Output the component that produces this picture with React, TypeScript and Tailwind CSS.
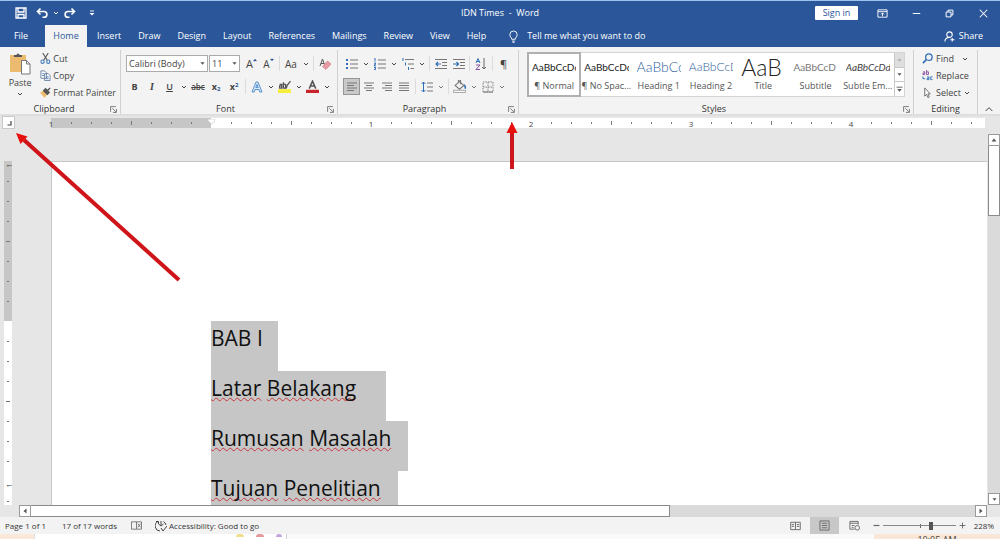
import { ReactNode } from 'react';
import { clsx } from 'clsx';

const tabs = ['Insert', 'Draw', 'Design', 'Layout', 'References', 'Mailings', 'Review', 'View', 'Help'];

const styles = [
  { name: '¶ Normal', sample: 'AaBbCcDd', look: 'text-[10px] text-[#222]', active: true },
  { name: '¶ No Spac...', sample: 'AaBbCcDd', look: 'text-[10px] text-[#222]' },
  { name: 'Heading 1', sample: 'AaBbCc', look: 'text-[14px] font-light text-[#2f5f9e]' },
  { name: 'Heading 2', sample: 'AaBbCcD', look: 'text-[12px] font-light text-[#2f5f9e]' },
  { name: 'Title', sample: 'AaB', look: 'text-[23px] font-light text-[#222]' },
  { name: 'Subtitle', sample: 'AaBbCcD', look: 'text-[10px] text-[#777]' },
  { name: 'Subtle Em...', sample: 'AaBbCcDd', look: 'text-[10px] italic text-[#444]' },
];

const paragraphs = [
  { words: ['BAB', 'I'], width: 'w-[67px]', checked: false },
  { words: ['Latar', 'Belakang'], width: 'w-[175px]', checked: true },
  { words: ['Rumusan', 'Masalah'], width: 'w-[197px]', checked: true },
  { words: ['Tujuan', 'Penelitian'], width: 'w-[187px]', checked: true },
];

type IconProps = { children: ReactNode; className?: string };

const Icon = ({ children, className }: IconProps) => (
  <svg viewBox="0 0 12 12" fill="none" stroke="currentColor" className={clsx('shrink-0', className || 'size-3')}>
    {children}
  </svg>
);

const Chevron = () => (
  <Icon className="size-[6px]">
    <path d="M2 4l4 4 4-4" strokeWidth="2" />
  </Icon>
);

const Triangle = () => (
  <Icon className="size-[5px]">
    <path d="M1 3h10l-5 6z" fill="currentColor" stroke="none" />
  </Icon>
);

type ToolProps = { label: string; children: ReactNode; className?: string };

const Tool = ({ label, children, className }: ToolProps) => (
  <button aria-label={label} className={clsx('flex h-[17px] shrink-0 items-center justify-center', className || 'w-[17px]')}>
    {children}
  </button>
);

const More = ({ label }: { label: string }) => (
  <Tool label={label} className="w-[11px]">
    <Chevron />
  </Tool>
);

const Sep = () => <span className="mx-[2px] h-[15px] w-px shrink-0 bg-[#dcdcdc]" />;

type GroupProps = { name: string; children: ReactNode; className?: string; launcher?: boolean };

const Group = ({ name, children, className, launcher = true }: GroupProps) => (
  <section className={clsx('flex flex-col border-r border-[#d0d0d0]', className)}>
    <div className="flex min-h-0 flex-1">{children}</div>
    <div className="flex h-[10px] items-center">
      <h2 className="flex-1 text-center text-[#333]">{name}</h2>
      {launcher && (
        <button aria-label={`${name} settings`} className="mr-[2px] flex size-[10px] items-center justify-center text-[#666]">
          <Icon className="size-[7px]">
            <path d="M1 10V1h9M4 4l6 6M11 5v6H5" strokeWidth="1.4" />
          </Icon>
        </button>
      )}
    </div>
  </section>
);

const lines = {
  left: 'M1 2h10M1 4.500h7M1 7h10M1 9.500h7',
  center: 'M1 2h10M3 4.500h6M1 7h10M3 9.500h6',
  right: 'M1 2h10M4 4.500h7M1 7h10M4 9.500h7',
  justify: 'M1 2h10M1 4.500h10M1 7h10M1 9.500h10',
};

const TitleBar = () => (
  <header className="grid h-[25px] grid-cols-[1fr_auto_1fr] items-center border-t border-[#9cc3ee]">
    <div className="flex items-center pl-3">
      <Tool label="Save">
        <Icon>
          <path d="M1 1h10v10H1zM3 1v4h6V1M3 11V7.500h6V11" strokeWidth="1.300" />
        </Icon>
      </Tool>
      <Tool label="Undo" className="ml-1 w-[17px]">
        <Icon>
          <path d="M4.500 1.500L1.500 4.500l3 3M1.500 4.500H8a2.800 2.800 0 0 1 0 5.800H6.500" strokeWidth="1.600" />
        </Icon>
      </Tool>
      <More label="Undo history" />
      <Tool label="Redo">
        <Icon>
          <path d="M7.500 1.500l3 3-3 3M10.500 4.500H4a2.800 2.800 0 0 0 0 5.800h1.500" strokeWidth="1.600" />
        </Icon>
      </Tool>
      <Tool label="Customize toolbar" className="ml-1 w-[19px]">
        <Icon className="size-[6px]">
          <path d="M2 2h8" strokeWidth="1.800" />
          <path d="M1 6h10l-5 5z" fill="currentColor" stroke="none" />
        </Icon>
      </Tool>
    </div>
    <h1>IDN Times&nbsp; -&nbsp; Word</h1>
    <div className="flex items-center justify-end">
      <button className="mr-2 h-[14px] w-[43px] rounded-[1px] bg-white text-[#2b579a]">Sign in</button>
      <Tool label="Ribbon display options" className="w-[33px]">
        <Icon className="size-[11px]">
          <path d="M1 2h10v8H1zM1 4h10M6 9V5.500M4.300 7L6 5.300 7.700 7" />
        </Icon>
      </Tool>
      <Tool label="Minimize" className="w-[34px]">
        <Icon className="size-[9px]">
          <path d="M1 6h10" strokeWidth="1.300" />
        </Icon>
      </Tool>
      <Tool label="Restore" className="w-[33px]">
        <Icon className="size-[9px]">
          <path d="M1.500 4h6.500v6.500H1.500zM4 4V1.500h6.500V8H8" strokeWidth="1.300" />
        </Icon>
      </Tool>
      <Tool label="Close" className="w-[34px]">
        <Icon className="size-[9px]">
          <path d="M1 1l10 10M11 1L1 11" strokeWidth="1.400" />
        </Icon>
      </Tool>
    </div>
  </header>
);

const TabBar = () => (
  <nav className="flex h-[22px] items-stretch">
    <button className="w-[45px] pr-[3px]">File</button>
    <button className="mr-px w-[42px] bg-[#f3f3f3] text-[#2b579a]">Home</button>
    {tabs.map((tab) => (
      <button key={tab} className="pr-2 pl-[9px]">
        {tab}
      </button>
    ))}
    <button className="flex items-center gap-2 pl-[14px]">
      <svg viewBox="0 0 12 14" fill="none" stroke="currentColor" className="h-[13px] w-[11px]">
        <path d="M4 10C4 8 2 7.500 2 5a4 4 0 0 1 8 0c0 2.500-2 3-2 5zM4.300 12h3.400M5 13.500h2" />
      </svg>
      Tell me what you want to do
    </button>
    <button className="ml-auto flex items-center gap-1 pr-[17px]">
      <Icon className="size-[11px]">
        <circle cx="6" cy="4" r="3" strokeWidth="1.200" />
        <path d="M1 11.500C1 8.500 3 7 6 7M9 7.500v4M7 9.500h4.500" strokeWidth="1.200" />
      </Icon>
      Share
    </button>
  </nav>
);

const Clipboard = () => (
  <Group name="Clipboard" className="w-[121px]">
    <button className="flex w-[41px] flex-col items-center gap-[3px] pt-[2px]">
      <svg viewBox="0 0 22 23" className="h-[23px] w-[22px]">
        <path d="M1 3h16v17H1z" fill="#edbb6f" />
        <path d="M5 5V3h2.500a1.500 1.500 0 0 1 3 0H13v2z" fill="#555" />
        <path d="M12.500 8.500h5l3.500 3.500v10h-8.500z" fill="#fff" stroke="#777" />
        <path d="M17.500 8.500V12H21" fill="none" stroke="#777" />
      </svg>
      <span className="leading-[10px]">Paste</span>
      <Chevron />
    </button>
    <div className="flex flex-col pr-1">
      <button className="flex h-[17px] items-center gap-[2px]">
        <Icon className="size-[11px]">
          <path d="M3 0l5 8M9 0L4 8" stroke="#555" strokeWidth="1.200" />
          <circle cx="2.800" cy="9.500" r="1.800" stroke="#4a7ebb" strokeWidth="1.200" />
          <circle cx="9" cy="9.500" r="1.800" stroke="#4a7ebb" strokeWidth="1.200" />
        </Icon>
        Cut
      </button>
      <button className="flex h-[17px] items-center gap-[2px]">
        <Icon className="size-[11px]">
          <path d="M1 1h4l2 2v6H1zM5 4h4l2 2v5.500H5z" fill="#fff" stroke="#6a7f9d" />
          <path d="M2.500 4h2M2.500 6h2M6.500 7.500h3M6.500 9.500h3" stroke="#4a7ebb" />
        </Icon>
        Copy
      </button>
      <button className="flex h-[17px] items-center gap-[2px] whitespace-nowrap">
        <Icon className="size-[11px]">
          <path d="M0 6l4-2 4 4-3 4z" fill="#edbb6f" stroke="none" />
          <path d="M4 4l2-2 4 4-2 2zM8 4l3-3" fill="#555" stroke="#555" strokeWidth="1.500" />
        </Icon>
        Format Painter
      </button>
    </div>
  </Group>
);

const Combo = ({ label, value, className }: { label: string; value: string; className: string }) => (
  <div className={clsx('relative', className)}>
    <select aria-label={label} className="h-[17px] w-full appearance-none border border-[#ababab] bg-white pl-[2px] text-[9px]">
      <option>{value}</option>
    </select>
    <span className="pointer-events-none absolute inset-y-0 right-[3px] flex items-center text-[#555]">
      <Triangle />
    </span>
  </div>
);

const FontGroup = () => (
  <Group name="Font" className="w-[217px] pl-[5px]">
    <div className="flex flex-col gap-[6px] pt-[5px]">
      <div className="flex items-center">
        <Combo label="Font" value="Calibri (Body)" className="w-[82px]" />
        <Combo label="Font size" value="11" className="ml-px w-[31px]" />
        <Tool label="Grow font" className="ml-[3px] w-[17px]">
          <span className="text-[11px]">A</span>
          <Icon className="mb-2 size-[4px] text-[#2b579a]">
            <path d="M1 9l5-6 5 6z" fill="currentColor" />
          </Icon>
        </Tool>
        <Tool label="Shrink font">
          <span className="text-[10px]">A</span>
          <Icon className="mb-2 size-[4px] text-[#2b579a]">
            <path d="M1 3l5 6 5-6z" fill="currentColor" />
          </Icon>
        </Tool>
        <Sep />
        <Tool label="Change case" className="w-[18px]">
          <span className="text-[10px]">Aa</span>
        </Tool>
        <More label="Case options" />
        <Sep />
        <Tool label="Clear formatting">
          <Icon className="size-[12px]">
            <path d="M1 8l2.500-7L6 8M2 5.500h3" stroke="#555" />
            <path d="M3.500 8.500L8.500 3 12 6l-5 5.500z" fill="#e79aa6" stroke="#d0707f" strokeWidth=".6" />
          </Icon>
        </Tool>
      </div>
      <div className="flex items-center">
        <Tool label="Bold"><b>B</b></Tool>
        <Tool label="Italic" className="w-[18px]">
          <i className="font-['Liberation_Serif',serif] text-[10px] font-bold">I</i>
        </Tool>
        <Tool label="Underline"><u className="font-semibold">U</u></Tool>
        <More label="Underline options" />
        <Tool label="Strikethrough" className="w-[18px]"><s className="text-[8px] font-semibold">abc</s></Tool>
        <Tool label="Subscript" className="w-[18px]">
          <b>x<sub className="text-[6px] text-[#2b579a]">2</sub></b>
        </Tool>
        <Tool label="Superscript" className="w-[18px]">
          <b>x<sup className="text-[6px] text-[#2b579a]">2</sup></b>
        </Tool>
        <Sep />
        <Tool label="Text effects">
          <Icon>
            <path d="M1 11L5 1h2l4 10H8.800L8 8.500H4L3.200 11zM4.800 6.500h2.400L6 3.300z" fill="#dbe9f8" stroke="#4a8ac9" strokeWidth=".9" />
          </Icon>
        </Tool>
        <More label="Effect options" />
        <Tool label="Highlight">
          <Icon className="size-[13px]">
            <path d="M0 8.500h12V12H0z" fill="#f7ee3a" stroke="none" />
            <path d="M1.500 4h2v3.500h-2V5.500h2M5 2v5.500h2V4H5M11.500 1L8.500 5 7.500 8" stroke="#555" strokeWidth="1.200" />
          </Icon>
        </Tool>
        <More label="Highlight colors" />
        <Tool label="Font color">
          <Icon className="size-[13px]">
            <path d="M0 9h12v3H0z" fill="#c8242b" stroke="none" />
            <path d="M3 8l3-7 3 7M4 5.500h4" stroke="#555" strokeWidth="1.400" />
          </Icon>
        </Tool>
        <More label="Font colors" />
      </div>
    </div>
  </Group>
);

const ParagraphGroup = () => (
  <Group name="Paragraph" className="w-[181px] pl-[5px]">
    <div className="flex flex-col gap-[6px] pt-[5px]">
      <div className="flex items-center">
        <Tool label="Bullets">
          <Icon>
            <path d="M4 2h8M4 6h8M4 10h8" stroke="#777" />
            <path d="M0 2h2M0 6h2M0 10h2" stroke="#2f6eb5" strokeWidth="2" />
          </Icon>
        </Tool>
        <More label="Bullet library" />
        <Tool label="Numbering">
          <Icon>
            <path d="M4 2h8M4 6h8M4 10h8" stroke="#777" />
            <path d="M1 0v3.500M0 5h1.500v1.500H.5V8H2M0 9.500h1.500v2H0" stroke="#2f6eb5" />
          </Icon>
        </Tool>
        <More label="Numbering library" />
        <Tool label="Multilevel list">
          <Icon>
            <path d="M3 1.500h9M6 6h6M8.500 10.500H12" stroke="#777" />
            <path d="M1 0v3M3.500 4.500v3M6.500 9v3" stroke="#2f6eb5" />
          </Icon>
        </Tool>
        <More label="List library" />
        <Sep />
        <Tool label="Decrease indent" className="w-[18px]">
          <Icon>
            <path d="M0 1.500h12M7 4.500h5M7 7.500h5M0 10.500h12" stroke="#777" />
            <path d="M6 6H1M3 4L1 6l2 2" stroke="#2f6eb5" strokeWidth="1.200" />
          </Icon>
        </Tool>
        <Tool label="Increase indent">
          <Icon>
            <path d="M0 1.500h12M7 4.500h5M7 7.500h5M0 10.500h12" stroke="#777" />
            <path d="M0 6h5M3.500 4l2 2-2 2" stroke="#2f6eb5" strokeWidth="1.200" />
          </Icon>
        </Tool>
        <Sep />
        <Tool label="Sort" className="w-[18px]">
          <Icon>
            <path d="M1 5l2-4.500L5 5M1.700 3.500h2.600" stroke="#2f6eb5" />
            <path d="M1 7h4l-4 4.500h4" stroke="#8a4fa0" />
            <path d="M9 0v11M7 9l2 2 2-2" stroke="#666" />
          </Icon>
        </Tool>
        <Sep />
        <Tool label="Show marks"><span className="text-[11px]">¶</span></Tool>
      </div>
      <div className="flex items-center text-[#777]">
        <Tool label="Align left" className="w-[17px] border border-[#969696] bg-[#c9c9c9]"><Icon><path d={lines.left} /></Icon></Tool>
        <Tool label="Center" className="w-[18px]"><Icon><path d={lines.center} /></Icon></Tool>
        <Tool label="Align right"><Icon><path d={lines.right} /></Icon></Tool>
        <Tool label="Justify" className="w-[18px]"><Icon><path d={lines.justify} /></Icon></Tool>
        <Sep />
        <Tool label="Line spacing">
          <Icon>
            <path d="M6 2h6M6 6h6M6 10h6" />
            <path d="M2.500 1v10M.5 3l2-2 2 2M.5 9l2 2 2-2" stroke="#2f6eb5" />
          </Icon>
        </Tool>
        <More label="Spacing options" />
        <Sep />
        <Tool label="Shading">
          <Icon className="size-[13px]">
            <path d="M2 5l4-3.500L10 5 6 8.500zM5 3V1a1 1 0 0 1 2 0v3" />
            <path d="M10 4.500c1.500 1 1.500 2.500 1 3.500" stroke="#2f6eb5" strokeWidth="1.400" />
            <path d="M.5 9.500h11v2H.5z" fill="#fff" stroke="#999" strokeWidth=".8" />
          </Icon>
        </Tool>
        <More label="Shading colors" />
        <Tool label="Borders">
          <Icon>
            <path d="M1 1h10v10H1zM6 1v10M1 6h10" strokeDasharray="1.500 1" strokeWidth=".9" />
            <path d="M1 11h10" />
          </Icon>
        </Tool>
        <More label="Border options" />
      </div>
    </div>
  </Group>
);

const StylesGroup = () => (
  <Group name="Styles" className="min-w-0 flex-1 pl-2">
    <div className="mt-[2px] mr-2 flex h-[45px] min-w-0 flex-1 border border-[#d4d4d4] bg-white">
      {styles.map((style) => (
        <button
          key={style.name}
          className={clsx(
            'flex min-w-0 flex-1 flex-col justify-end pb-1',
            style.active && 'outline-2 -outline-offset-1 outline-[#b0b0b0]',
          )}
        >
          <span className={clsx("mx-1 h-[26px] self-stretch overflow-hidden text-left font-['Lato',sans-serif] leading-[26px] whitespace-nowrap", style.look)}>
            {style.sample}
          </span>
          <span className="self-stretch text-center leading-3 whitespace-nowrap text-[#555]">{style.name}</span>
        </button>
      ))}
      <div className="flex w-[10px] flex-col divide-y divide-[#c8c8c8] border-l border-[#c8c8c8] text-[#555]">
        <button aria-label="Previous styles" className="flex flex-1 items-center justify-center bg-[#dedede] text-[#aaa]">
          <Icon className="size-[5px]"><path d="M1 9h10L6 3z" fill="currentColor" stroke="none" /></Icon>
        </button>
        <button aria-label="Next styles" className="flex flex-1 items-center justify-center"><Triangle /></button>
        <button aria-label="All styles" className="flex flex-1 items-center justify-center">
          <Icon className="size-[7px]">
            <path d="M1 2h10" strokeWidth="1.500" />
            <path d="M2 5h8l-4 5z" fill="currentColor" stroke="none" />
          </Icon>
        </button>
      </div>
    </div>
  </Group>
);

const Editing = () => (
  <Group name="Editing" className="w-[64px]" launcher={false}>
    <div className="flex flex-col pl-2">
      <button className="flex h-[17px] items-center gap-[3px]">
        <Icon className="size-[11px]">
          <circle cx="7.500" cy="4.500" r="3.500" stroke="#2f6eb5" strokeWidth="1.400" />
          <path d="M5 7l-4 4" stroke="#2f6eb5" strokeWidth="1.800" />
        </Icon>
        Find
        <span className="ml-[5px]"><Chevron /></span>
      </button>
      <button className="flex h-[17px] items-center gap-[3px]">
        <Icon className="size-[11px]">
          <path d="M1 2h2v3H1V3.500h2M5 0v5h2V2H5" stroke="#8a4fa0" />
          <path d="M5.500 7.500h2v3h-2V9h2M11.500 7.500h-2v3h2M1 7v2.500h2.500" stroke="#2f6eb5" />
        </Icon>
        Replace
      </button>
      <button className="flex h-[17px] items-center gap-[3px]">
        <Icon className="size-[11px]">
          <path d="M3 1v9l2-2 1.500 3.500 1.500-.7L6.500 7.500H9z" fill="#fff" stroke="#666" />
        </Icon>
        Select
        <Chevron />
      </button>
    </div>
  </Group>
);

const Ribbon = () => (
  <div className="flex h-[69px] border-b-2 border-[#dedede] bg-[#f3f3f3] pt-[3px] text-[#444]">
    <Clipboard />
    <FontGroup />
    <ParagraphGroup />
    <StylesGroup />
    <Editing />
    <button aria-label="Collapse ribbon" className="flex w-[22px] items-end justify-center pb-px">
      <Icon className="size-[8px]"><path d="M1 9l5-5 5 5" strokeWidth="1.500" /></Icon>
    </button>
  </div>
);

const Mark = ({ step, vertical = false }: { step: number; vertical?: boolean }) => {
  // Eight steps to the inch, zero sits on the page margin
  if (step !== 0 && step % 8 === 0) {
    return <span className={clsx('text-[8px] leading-[9px] text-[#444]', vertical && '-rotate-90')}>{Math.abs(step / 8)}</span>;
  }
  if (step === 0) return null;
  const half = step % 4 === 0;
  if (vertical) return <span className={clsx('h-px bg-[#777]', half ? 'w-1' : 'w-[2px]')} />;
  return <span className={clsx('w-px bg-[#777]', half ? 'h-1' : 'h-[2px]')} />;
};

const Ruler = () => (
  <div className="flex h-[14px] items-start">
    <button aria-label="Tab selector" className="ml-[2px] flex size-[13px] items-center justify-center border border-[#c8c8c8] bg-white text-[#444]">
      <Icon className="size-[6px]"><path d="M10 2v8H3" strokeWidth="2.400" /></Icon>
    </button>
    <div className="mt-[2px] mr-[15px] ml-[26px] flex h-[10px] min-w-0 flex-1 items-center overflow-hidden bg-[linear-gradient(to_right,#e6e6e6_10px,#c6c6c6_10px,#c6c6c6_170px,#fff_170px)]">
      {Array.from({ length: 60 }, (_, i) => i - 8).map((step) => (
        <span key={step} className="flex w-5 shrink-0 items-center justify-center">
          {step === 0 ? (
            <svg viewBox="0 0 7 9" className="h-[9px] w-[7px]">
              <path d="M0 0h7v2L3.500 5 0 2z" fill="#fff" stroke="#bbb" strokeWidth=".6" />
            </svg>
          ) : (
            <Mark step={step} />
          )}
        </span>
      ))}
    </div>
  </div>
);

const Page = () => (
  <article className="mt-[31px] mr-px flex-1 overflow-hidden border-t border-l border-[#c6c6c6] bg-white pt-[159px] pl-[159px] font-['Open_Sans',sans-serif] text-[21px] text-[#111]">
    {paragraphs.map(({ words, width, checked }) => (
      <p key={words[0]} className={clsx('h-[50px] bg-[#c6c6c6] leading-[34px] whitespace-nowrap', width)}>
        {words.map((word, i) => (
          <span key={word}>
            {i > 0 && ' '}
            <span
              className={clsx(
                checked && 'underline decoration-[#c8373c] decoration-wavy decoration-1 underline-offset-1 [text-decoration-skip-ink:none]',
              )}
            >
              {word}
            </span>
          </span>
        ))}
      </p>
    ))}
  </article>
);

const VerticalRuler = () => (
  <div className="mt-[31px] ml-1 flex w-2 flex-col overflow-hidden bg-[linear-gradient(#c6c6c6_160px,#fff_160px)]">
    {Array.from({ length: 60 }, (_, i) => i - 8).map((step) => (
      <span key={step} className="flex h-5 shrink-0 items-start justify-center">
        <Mark step={step} vertical />
      </span>
    ))}
  </div>
);

const arrowButton = 'flex size-3 shrink-0 items-center justify-center border border-[#9a9a9a] bg-white text-[#555]';

const VerticalScroll = () => (
  <div className="mt-[4px] flex w-[12px] flex-col bg-[#dadada]">
    <button aria-label="Scroll up" className={arrowButton}>
      <Icon className="size-[6px]"><path d="M1 9h10L6 3z" fill="currentColor" stroke="none" /></Icon>
    </button>
    <span className="h-[70px] border border-t-0 border-[#8a8a8a] bg-white" />
    <button aria-label="Scroll down" className={clsx(arrowButton, 'mt-auto')}><Triangle /></button>
  </div>
);

const HorizontalScroll = () => (
  <div className="mr-[13px] ml-[19px] flex h-3 bg-[#dadada]">
    <button aria-label="Scroll left" className={arrowButton}>
      <Icon className="size-[6px]"><path d="M9 1v10L3 6z" fill="currentColor" stroke="none" /></Icon>
    </button>
    <span className="w-[66%] border border-l-0 border-[#8a8a8a] bg-white" />
    <button aria-label="Scroll right" className={clsx(arrowButton, 'ml-auto')}>
      <Icon className="size-[6px]"><path d="M3 1v10l6-5z" fill="currentColor" stroke="none" /></Icon>
    </button>
  </div>
);

const StatusBar = () => (
  <footer className="flex h-[17px] items-center bg-[#f3f3f3] pr-[6px] pl-[5px] text-[8px] text-[#333]">
    <span>Page 1 of 1</span>
    <span className="ml-4">17 of 17 words</span>
    <Tool label="Proofing" className="ml-[11px] w-[17px]">
      <Icon className="size-[11px]">
        <path d="M6 10H.5V2H6v8zM6 2h5.500v8H6M7.500 4l3 4M10.500 4l-3 4" stroke="#666" strokeWidth=".9" />
      </Icon>
    </Tool>
    <button className="ml-[10px] flex items-center gap-[2px]">
      <Icon className="size-[12px]">
        <path d="M3 1.500A5 5 0 0 0 5 11M8.500 1.500A5 5 0 0 1 11 5M6 1v4M3.500 4l2.500 2 2.500-2M6 8l2 3 4-5M1 1.500h2.500V4" strokeWidth=".9" />
      </Icon>
      Accessibility: Good to go
    </button>
    <div className="ml-auto flex items-center text-[#666]">
      <Tool label="Read mode" className="w-[30px]">
        <Icon className="size-[11px]">
          <path d="M6 10.500V2.500H.8v8H6h5.200v-8H6M2 5h2.500M2 7h2.500M7.500 5H10M7.500 7H10" />
        </Icon>
      </Tool>
      <Tool label="Print layout" className="w-[29px] bg-[#c8c8c8]">
        <Icon className="size-[11px]"><path d="M1 1h10v10H1zM3 3.500h6M3 6h6M3 8.500h6" /></Icon>
      </Tool>
      <Tool label="Web layout" className="w-[30px]">
        <Icon className="size-[11px]">
          <path d="M6 10H1V1.500h9V5M1 3.500h9M3 6h3M3 8h2" />
          <circle cx="9" cy="8.500" r="2.500" />
        </Icon>
      </Tool>
      <Tool label="Zoom out" className="w-[14px]">
        <Icon className="size-[7px]"><path d="M1 6h10" strokeWidth="2" /></Icon>
      </Tool>
      <div className="relative flex h-[9px] w-[73px] items-center">
        <span className="absolute left-1/2 h-1 w-px bg-[#666]" />
        <input
          type="range"
          aria-label="Zoom"
          min={0}
          max={100}
          defaultValue={66}
          className="relative h-px w-full appearance-none bg-[#888] [&::-webkit-slider-thumb]:h-2 [&::-webkit-slider-thumb]:w-1 [&::-webkit-slider-thumb]:appearance-none [&::-webkit-slider-thumb]:bg-[#555]"
        />
      </div>
      <Tool label="Zoom in" className="w-[12px]">
        <Icon className="size-[7px]"><path d="M1 6h10M6 1v10" strokeWidth="1.600" /></Icon>
      </Tool>
      <button className="w-[26px] text-right text-[#333]">228%</button>
    </div>
  </footer>
);

const Taskbar = () => (
  <div className="flex h-[5px] overflow-hidden bg-[#fbfaf8] text-[9px] text-[#444]">
    <span className="w-[35px] border-r border-[#ddd] bg-[#fae8da]" />
    <span className="flex w-[252px] items-start justify-end gap-3 border-r border-[#ccc] bg-white pr-1">
      <span className="h-[3px] w-2 rounded-t-full bg-[#f3dc8c]" />
      <span className="h-[3px] w-2 rounded-t-full bg-[#e39a9f]" />
      <span className="h-[3px] w-[6px] rounded-t-full bg-[#c3a4de]" />
    </span>
    <span className="ml-auto w-[126px] bg-[#fae6d6] text-center leading-[11px]">10:05 AM</span>
  </div>
);

const Arrows = () => (
  <svg className="pointer-events-none absolute top-0 left-0 h-[300px] w-[540px]" viewBox="0 0 540 300">
    <path d="M179 280L24 140M512 169V132" stroke="#cf1519" strokeWidth="4" fill="none" />
    <path d="M16 133l11.500 3.500-7 7.500zM512 122l5.500 11h-11z" fill="#e8100f" />
  </svg>
);

const App = () => {
  return (
    <div className="relative flex h-screen flex-col overflow-hidden bg-[#e6e6e6] font-['Open_Sans',sans-serif] text-[9px] leading-3">
      <div className="bg-[#2b579a] text-white">
        <TitleBar />
        <TabBar />
      </div>
      <Ribbon />
      <Ruler />
      <main className="flex min-h-0 flex-1">
        <VerticalRuler />
        <div className="ml-[39px] flex min-w-0 flex-1 flex-col">
          <Page />
        </div>
        <VerticalScroll />
      </main>
      <HorizontalScroll />
      <StatusBar />
      <Taskbar />
      <Arrows />
    </div>
  );
};

export default App;
